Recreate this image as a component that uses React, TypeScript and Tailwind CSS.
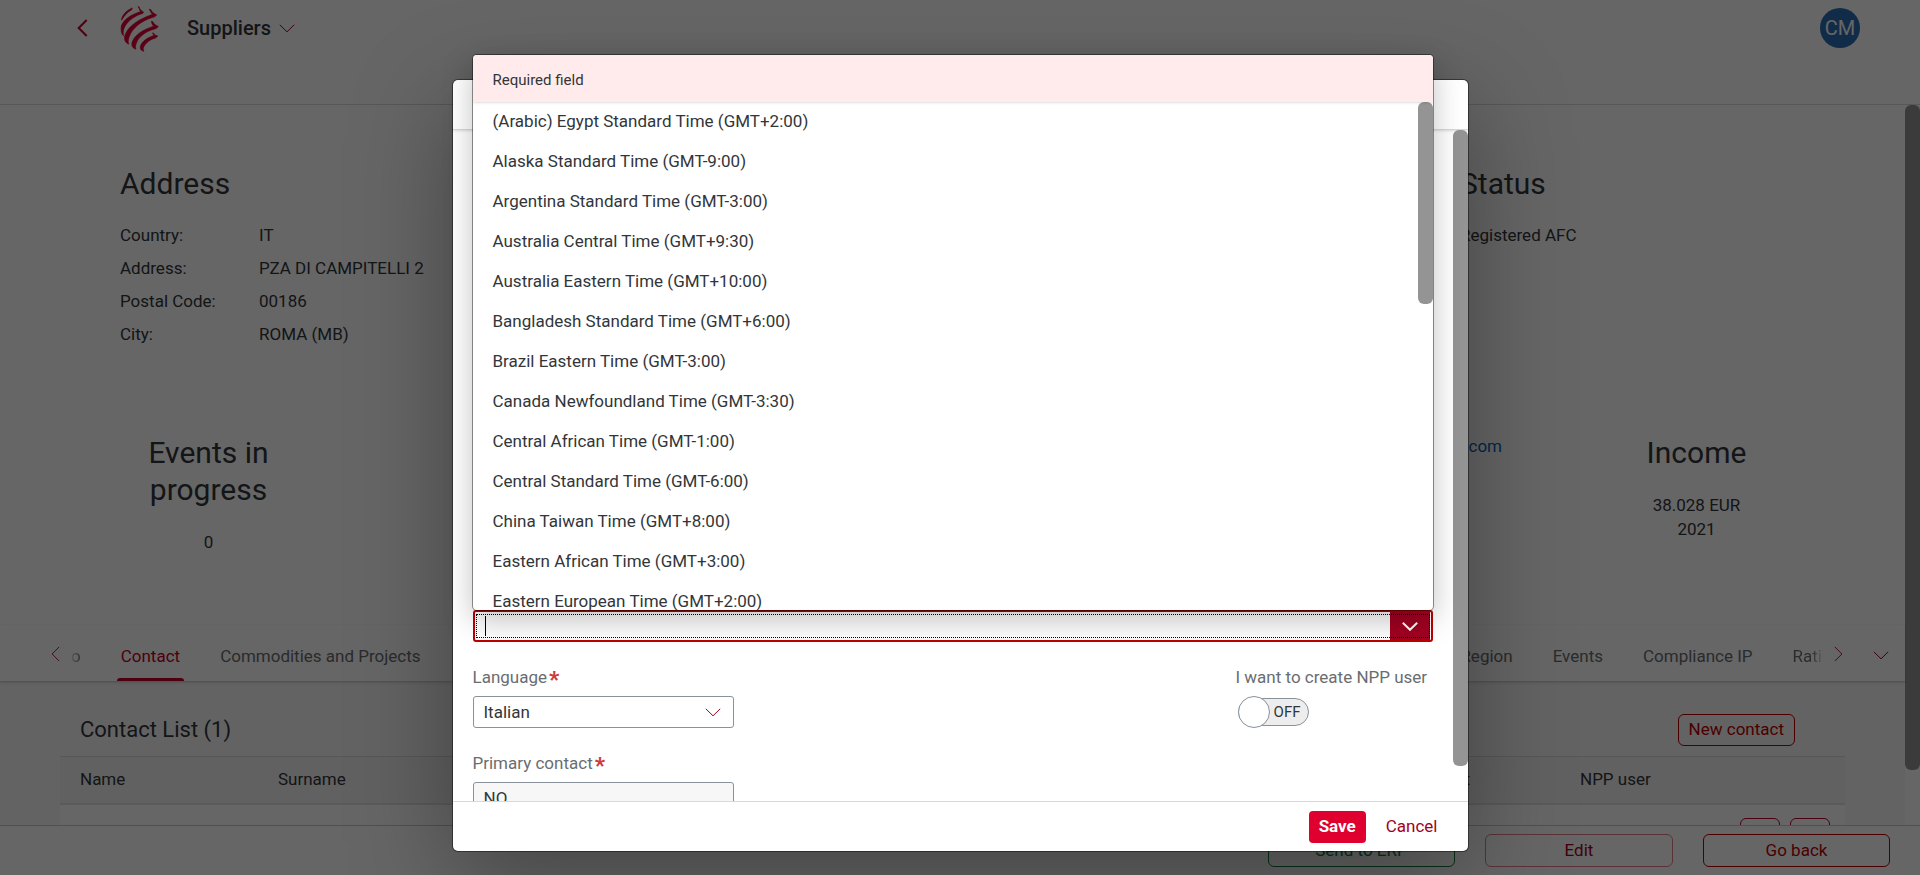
import { useState } from "react";

const timeZones = [
  "(Arabic) Egypt Standard Time (GMT+2:00)",
  "Alaska Standard Time (GMT-9:00)",
  "Argentina Standard Time (GMT-3:00)",
  "Australia Central Time (GMT+9:30)",
  "Australia Eastern Time (GMT+10:00)",
  "Bangladesh Standard Time (GMT+6:00)",
  "Brazil Eastern Time (GMT-3:00)",
  "Canada Newfoundland Time (GMT-3:30)",
  "Central African Time (GMT-1:00)",
  "Central Standard Time (GMT-6:00)",
  "China Taiwan Time (GMT+8:00)",
  "Eastern African Time (GMT+3:00)",
  "Eastern European Time (GMT+2:00)",
];

const address = [
  ["Country:", "IT"],
  ["Address:", "PZA DI CAMPITELLI 2"],
  ["Postal Code:", "00186"],
  ["City:", "ROMA (MB)"],
];

function ChevronDown({ className }: { className: string }) {
  return (
    <svg viewBox="0 0 16 9" fill="none" stroke="currentColor" className={className} aria-hidden="true">
      <path d="M0.8 0.8 L8 7.8 L15.2 0.8" />
    </svg>
  );
}

function ChevronSide({ className }: { className: string }) {
  return (
    <svg viewBox="0 0 10 18" fill="none" stroke="currentColor" className={className} aria-hidden="true">
      <path d="M9.2 1 L1.2 9 L9.2 17" />
    </svg>
  );
}

function Logo() {
  return (
    <svg viewBox="0 0 120 140" className="h-[47px] w-10 fill-[#e10032] stroke-[#e10032] stroke-2" aria-hidden="true">
      <path d="M34 8 L37 10 C36 13 35 14 33 15 C22 21 12 32 5 45 C4 34 18 16 33 11 Z" />
      <path d="M54 4 L58 6 C58 11 65 17 71 21 C69 25 66 26 61 27 C40 34 18 52 12 70 C9 78 9 86 11 92 C4 87 2 76 4 62 C12 42 34 28 61 20 C60 14 57 9 54 4 Z" />
      <path d="M88 12 L93 14 C95 20 102 26 110 29 C107 34 103 36 97 37 C68 45 36 68 27 96 C24 104 24 111 26 117 C17 114 12 104 14 93 C22 64 56 42 97 28 C93 23 91 18 88 12 Z" />
      <path d="M94 48 L99 50 C101 57 108 61 115 64 C112 69 108 71 102 72 C76 79 55 96 49 114 C46 121 46 127 48 132 C39 130 34 123 36 113 C42 90 68 74 101 63 C97 59 95 54 94 48 Z" />
      <path d="M98 83 L102 85 C103 89 108 91 113 92 C111 97 107 99 102 100 C86 105 74 117 70 128 C69 132 70 135 72 138 C62 137 59 130 62 121 C68 107 83 97 102 91 C100 88 98 86 98 83 Z" />
    </svg>
  );
}

function Label({ htmlFor, required, children }: { htmlFor: string; required?: boolean; children: string }) {
  return (
    <label htmlFor={htmlFor} className="flex h-6 items-center text-[#6a6d70]">
      {children}
      {required && <span className="ml-0.5 h-6 text-[22px] leading-7 font-black text-[#ce3b3b]">*</span>}
    </label>
  );
}

function ShellHeader() {
  return (
    <header className="z-10 h-[105px] shrink-0 border-b border-[#d9d9d9] bg-white">
      <div className="flex h-14 items-center pr-15 pl-[77px]">
        <button aria-label="Back" className="text-[#c00028]">
          <ChevronSide className="h-[18px] w-[11px] stroke-2" />
        </button>
        <div className="ml-8">
          <Logo />
        </div>
        <button className="ml-[27px] flex items-center gap-2 text-xl font-medium">
          Suppliers
          <ChevronDown className="h-[9px] w-4 text-[#a20021]" />
        </button>
        <button className="ml-auto size-10 rounded-full bg-[#286eb4] text-xl text-white">CM</button>
      </div>
    </header>
  );
}

function Overview() {
  return (
    <section className="flex min-h-[520px] flex-col bg-white pt-[59px]">
      <div className="flex h-[270px] items-start justify-between pl-[120px]">
        <div>
          <h2 className="h-[55px] text-3xl leading-10">Address</h2>
          <dl className="grid grid-cols-[139px_auto] leading-[33px]">
            {address.map(([name, value]) => (
              <div key={name} className="contents">
                <dt>{name}</dt>
                <dd>{value}</dd>
              </div>
            ))}
          </dl>
        </div>
        <div className="w-[445px]">
          <h2 className="h-[55px] text-3xl leading-10">Status</h2>
          <p className="leading-[33px]">Registered AFC</p>
        </div>
      </div>
      <div className="flex items-start px-[120px] text-center">
        <div className="w-[177px]">
          <h2 className="text-3xl leading-[37px]">Events in progress</h2>
          <p className="pt-4 leading-9">0</p>
        </div>
        <a href="#mail" className="mr-[106px] ml-auto leading-6 text-[#0a5fb8]">.com</a>
        <div className="w-[177px]">
          <h2 className="text-3xl leading-[37px]">Income</h2>
          <p className="mx-auto w-24 pt-[22px] leading-6">38.028 EUR 2021</p>
        </div>
      </div>
    </section>
  );
}

function TabBar() {
  return (
    <nav className="z-10 flex h-[57px] shrink-0 items-stretch border-b border-[#d0d0d0] bg-white pr-4 pl-[51px] text-[#6a6d70] shadow-sm">
      <button aria-label="Previous tabs" className="pt-0.5 text-[#a20021]">
        <ChevronSide className="h-4 w-[9px]" />
      </button>
      <div className="flex flex-1 justify-between pl-[11px] leading-[63px]">
        <div className="flex gap-10">
          <a href="#info" className="bg-linear-to-r from-[#6a6d7030] to-[#6a6d70] bg-clip-text text-transparent">o</a>
          <a href="#contact" className="relative text-[#c00028]">
            Contact
            <span className="absolute -right-1 bottom-0 -left-1 h-[3px] rounded-t-sm bg-[#c00028]" />
          </a>
          <a href="#commodities">Commodities and Projects</a>
        </div>
        <div className="flex gap-10">
          <a href="#region">Region</a>
          <a href="#events">Events</a>
          <a href="#compliance">Compliance IP</a>
          <a href="#rating" className="bg-linear-to-r from-[#6a6d70] from-60% to-[#6a6d7030] bg-clip-text text-transparent">Rati</a>
        </div>
      </div>
      <button aria-label="Next tabs" className="ml-3 pt-0.5 text-[#a20021]">
        <ChevronSide className="h-4 w-[9px] rotate-180" />
      </button>
      <button aria-label="All tabs" className="ml-[30px] pt-1 text-[#a20021]">
        <ChevronDown className="h-[9px] w-4" />
      </button>
    </nav>
  );
}

function ContactList() {
  return (
    <section className="flex-1 bg-[#f7f7f7] px-[60px] pt-[30px]">
      <div className="flex items-center justify-between pr-[50px] pl-5">
        <h3 className="text-[22px] leading-9">Contact List (1)</h3>
        <button className="h-8 rounded-md border border-[#bb0000] px-2.5 text-[#bb0000]">New contact</button>
      </div>
      <table className="mt-2 w-full table-fixed border-t border-[#d9d9d9] bg-white text-left">
        <thead>
          <tr className="h-[47px] border-b-2 border-[#e0e0e0] bg-[#f2f2f2]">
            <th className="w-[198px] pl-5 font-normal">Name</th>
            <th className="pl-5 font-normal">Surname</th>
            <th className="w-[395px] pr-[90px] text-right font-normal">Contact</th>
            <th className="w-[285px] pl-5 font-normal">NPP user</th>
          </tr>
        </thead>
        <tbody>
          <tr>
            <td colSpan={4} className="pt-[13px] pr-[15px] text-right">
              <div className="flex justify-end gap-2.5">
                <button aria-label="Edit contact" className="h-8 w-10 rounded-md border border-[#bb0030]" />
                <button aria-label="Delete contact" className="h-8 w-10 rounded-md border border-[#bb0030]" />
              </div>
            </td>
          </tr>
        </tbody>
      </table>
    </section>
  );
}

function PageFooter() {
  return (
    <footer className="flex h-[50px] shrink-0 justify-end gap-[30px] border-t border-[#c8c8c8] bg-white px-[30px] pt-2">
      <button className="h-[33px] w-[187px] rounded-md border border-[#107e3e] text-[#107e3e]">Send to ERP</button>
      <button className="h-[33px] w-[188px] rounded-md border border-[#e08090] text-[#a20021]">Edit</button>
      <button className="h-[33px] w-[187px] rounded-md border border-[#bb0000] text-[#bb0000]">Go back</button>
    </footer>
  );
}

function TimeZonePopup() {
  return (
    <div className="absolute -top-[25px] right-[35px] bottom-[241px] left-5 flex flex-col overflow-hidden rounded bg-white shadow-[0_0_0_1px_rgba(0,0,0,0.42),0_10px_30px_rgba(0,0,0,0.25)]">
      <div className="z-10 h-[47px] shrink-0 bg-[#ffebeb] px-5 text-[15px] leading-[50px] shadow-sm">
        Required field
      </div>
      <div className="flex min-h-0 flex-1 overflow-hidden">
        <ul className="flex-1" role="listbox" aria-label="Time zones">
          {timeZones.map((zone) => (
            <li key={zone} role="option" aria-selected="false" className="h-10 px-5 leading-[38px]">
              {zone}
            </li>
          ))}
        </ul>
        <div className="h-[202px] w-[15px] rounded-md bg-[#949494]" />
      </div>
    </div>
  );
}

function ContactDialog() {
  const [npp, setNpp] = useState(false);
  return (
    <div
      role="dialog"
      aria-modal="true"
      className="relative flex w-[1015px] max-w-full flex-col rounded-[5px] bg-white shadow-[0_0_0_1px_rgba(0,0,0,0.42),0_25px_100px_rgba(0,0,0,0.35)]"
    >
      <div className="h-[50px] shrink-0 border-b border-[#d9d9d9] shadow-sm" />
      <div className="flex min-h-0 flex-1 overflow-hidden">
        <form className="flex-1 pt-[480px] pr-5 pl-5">
          <div className="relative flex h-8 rounded-[3px] border-2 border-[#bb0000] pr-px">
            <input aria-label="Time zone" className="min-w-0 flex-1 px-2 outline-none" />
            <button type="button" aria-label="Open time zones" className="flex w-10 items-center justify-center bg-[#a20021] text-white">
              <ChevronDown className="h-[9px] w-4 stroke-2" />
            </button>
            <span className="pointer-events-none absolute inset-x-px inset-y-0.5 border border-dotted border-black" />
            <span className="pointer-events-none absolute top-1 bottom-1 left-2.5 w-px bg-black" />
          </div>
          <div className="mt-6 flex justify-between">
            <div className="w-[261px]">
              <Label htmlFor="language" required>Language</Label>
              <div className="relative mt-1.5">
                <select id="language" className="h-8 w-full appearance-none rounded-[3px] border border-[#89919a] bg-white px-2.5 pt-0.5">
                  <option>Italian</option>
                </select>
                <ChevronDown className="pointer-events-none absolute top-3 right-[13px] h-[9px] w-4 text-[#a20021]" />
              </div>
            </div>
            <div className="w-[197px]">
              <Label htmlFor="npp">I want to create NPP user</Label>
              <label className="relative mt-1.5 ml-0.5 flex h-8 w-[71px] items-center">
                <input
                  id="npp"
                  type="checkbox"
                  role="switch"
                  checked={npp}
                  onChange={(event) => setNpp(event.target.checked)}
                  className="h-7 w-full appearance-none rounded-full border border-[#89919a] bg-[#ededed]"
                />
                <span className="absolute left-0 size-8 rounded-full border border-[#89919a] bg-white" />
                <span className="absolute right-2 text-[15px]">{npp ? "ON" : "OFF"}</span>
              </label>
            </div>
          </div>
          <div className="mt-6 w-[261px]">
            <Label htmlFor="primary" required>Primary contact</Label>
            <select id="primary" className="mt-1.5 h-8 w-full appearance-none rounded-[3px] border border-[#89919a] bg-[#f7f7f7] px-2.5 pt-0.5">
              <option>NO</option>
            </select>
          </div>
        </form>
        <div className="h-[636px] w-[15px] shrink-0 rounded-md bg-[#949494]" />
      </div>
      <div className="flex h-[50px] shrink-0 items-center justify-end gap-2.5 border-t border-[#d9d9d9] pr-5">
        <button className="h-8 rounded bg-[#e00030] px-2.5 font-bold text-white">Save</button>
        <button className="h-8 px-2.5 text-[#a20021]">Cancel</button>
      </div>
      <TimeZonePopup />
    </div>
  );
}

export default function App() {
  return (
    <div className="relative flex h-screen flex-col overflow-hidden bg-white font-['Roboto',sans-serif] text-[17px] text-[#32363a]">
      <ShellHeader />
      <main className="flex min-h-0 flex-1 overflow-hidden">
        <div className="flex min-w-0 flex-1 flex-col">
          <Overview />
          <TabBar />
          <ContactList />
        </div>
        <div className="h-[665px] w-[15px] shrink-0 rounded-md bg-[#949494]" />
      </main>
      <PageFooter />
      <div className="absolute inset-0 z-20 flex justify-center bg-black/60 pt-20 pb-6">
        <ContactDialog />
      </div>
    </div>
  );
}
